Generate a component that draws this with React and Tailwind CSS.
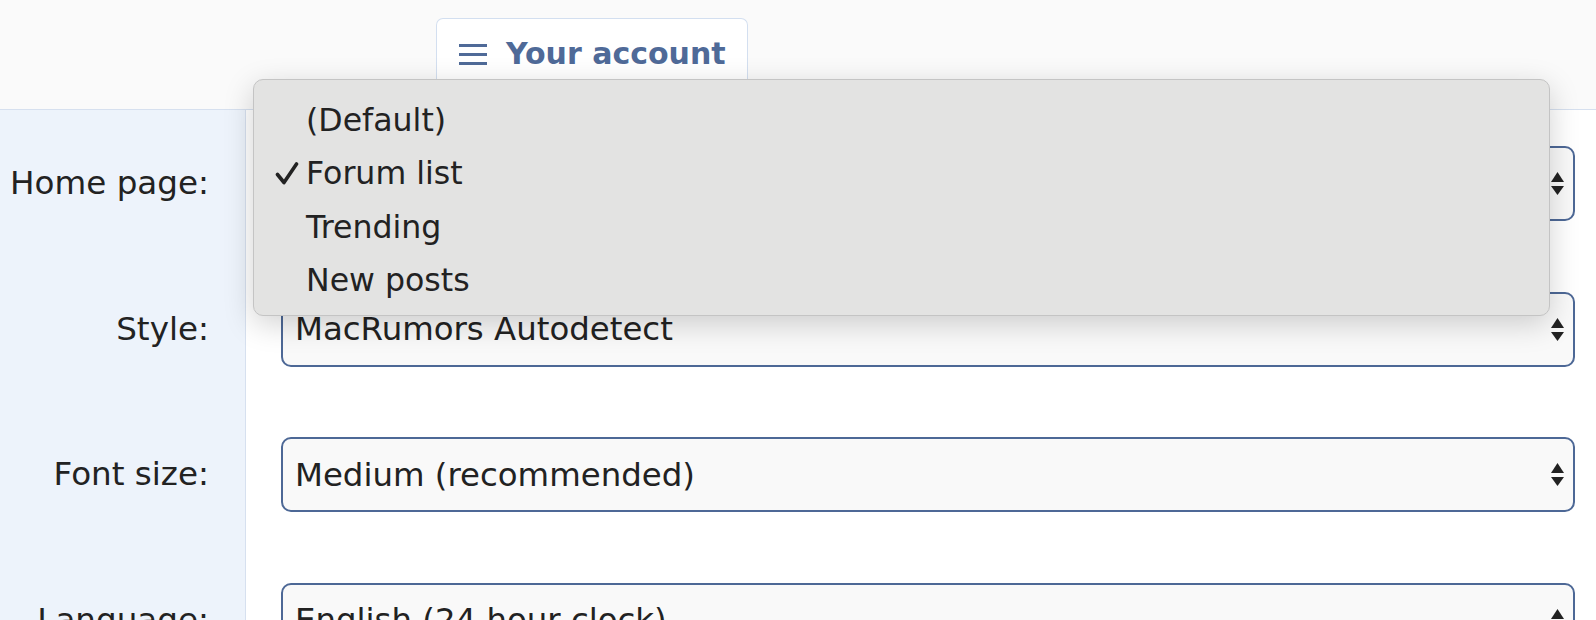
import React from "react";

const rows = [
  { label: "Home page:", value: "Forum list" },
  { label: "Style:", value: "MacRumors Autodetect" },
  { label: "Font size:", value: "Medium (recommended)" },
  { label: "Language:", value: "English (24 hour clock)" },
];

const menuItems = ["(Default)", "Forum list", "Trending", "New posts"];

const SelectArrows = () => (
  <svg width="13" height="23" viewBox="0 0 13 23" className="shrink-0">
    <path d="M0 10 L6.5 0 L13 10 Z" fill="#222" />
    <path d="M0 14 L13 14 L6.5 23 Z" fill="#222" />
  </svg>
);

const Check = () => (
  <svg width="24" height="23" viewBox="0 0 24 23">
    <path
      d="M2.5 12.5 L9 20.5 L21.5 2"
      fill="none"
      stroke="#222"
      strokeWidth="3.6"
      strokeLinecap="round"
      strokeLinejoin="round"
    />
  </svg>
);

const App = () => {
  return (
    <div
      className="relative w-[1596px] h-[620px] overflow-hidden bg-white text-[#222]"
      style={{ fontFamily: '"DejaVu Sans", Verdana, sans-serif' }}
    >
      {/* header with tab */}
      <div className="h-[110px] bg-[#fafafa] border-b border-[#d6e0ef] flex items-end pl-[436px]">
        <div className="w-[312px] h-[92px] bg-white border border-b-0 border-[#d3dff0] rounded-t-[7px] mb-[-1px]">
          <div className="h-[70px] flex items-center pl-[22px] gap-[19px] text-[#4f6a98]">
            <div className="flex flex-col gap-[6px] w-[28px]">
              <span className="block h-[3px] bg-[#4f6a98]"></span>
              <span className="block h-[3px] bg-[#4f6a98]"></span>
              <span className="block h-[3px] bg-[#4f6a98]"></span>
            </div>
            <span className="text-[30px] font-bold leading-none">Your account</span>
          </div>
        </div>
      </div>

      {/* form rows */}
      <div>
        {rows.map((row) => (
          <div key={row.label} className="flex h-[145.7px]">
            <div className="w-[246px] shrink-0 bg-[#edf3fb] border-r border-[#d6e0ef] pt-[36px] pr-[36px] flex justify-end">
              <div className="h-[75px] flex items-center text-[32.6px]">{row.label}</div>
            </div>
            <div className="flex-1 pt-[36px] pl-[35px] pr-[21px]">
              <div className="h-[75px] bg-[#f9f9f9] border-2 border-[#4d6896] rounded-[10px] flex items-center justify-between pl-[12px] pr-[9px]">
                <span className="text-[32.4px]">{row.value}</span>
                <SelectArrows />
              </div>
            </div>
          </div>
        ))}
      </div>

      {/* open select menu */}
      <div className="absolute left-[253px] top-[79px] w-[1297px] h-[237px] bg-[#e3e3e2] border border-[#c4c4c4] rounded-[10px] shadow-[0_8px_30px_rgba(0,0,0,0.18)] pt-[14px]">
        {menuItems.map((item) => (
          <div key={item} className="flex items-center h-[53.3px] text-[31.6px] text-[#222]">
            <span className="w-[52px] shrink-0 pl-[21px] flex items-center">
              {item === "Forum list" ? <Check /> : null}
            </span>
            <span>{item}</span>
          </div>
        ))}
      </div>
    </div>
  );
};

export default App;
